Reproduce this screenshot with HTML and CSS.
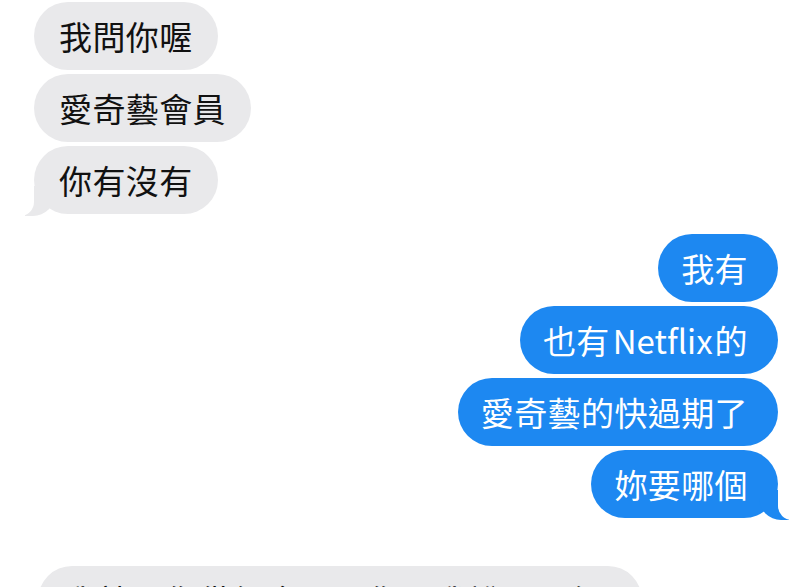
FILE: index.html
```html
<!DOCTYPE html>
<html lang="zh-Hant">
<head>
    <meta charset="UTF-8">
    <title>訊息</title>
    <link rel="stylesheet" href="styles.css">
</head>
<body>

    <div class="chat">
        <div class="group them">
            <div class="bubble">我問你喔</div>
            <div class="bubble">愛奇藝會員</div>
            <div class="bubble tail">你有沒有</div>
        </div>

        <div class="group me">
            <div class="bubble">我有</div>
            <div class="bubble">也有<span class="latin">Netflix</span>的</div>
            <div class="bubble">愛奇藝的快過期了</div>
            <div class="bubble tail">妳要哪個</div>
        </div>

        <div class="group them later">
            <div class="bubble wide">我就跟你借個會員，你跟我說要哪個</div>
        </div>
    </div>

</body>
</html>
```

FILE: styles.css
```css
* {
    margin: 0;
    padding: 0;
    box-sizing: border-box;
}
html, body {
    height: 100%;
    overflow: hidden;
    background: #fff;
}
.chat {
    display: flex;
    flex-direction: column;
    padding-top: 2px;
    font-family: "Noto Sans CJK TC", "Noto Sans", sans-serif;
    font-size: 33px;
}
.group {
    display: flex;
    flex-direction: column;
    gap: 4px;
}
.them {
    align-items: flex-start;
    margin-left: 34px;
}
.me {
    align-items: flex-end;
    margin-right: 21px;
    margin-top: 20px;
}
.later {
    margin-top: 48px;
    margin-left: 38px;
}
.bubble {
    position: relative;
    height: 68px;
    line-height: 68px;
    border-radius: 34px;
    white-space: nowrap;
    letter-spacing: 0.4px;
}
.them .bubble {
    background: #e9e9eb;
    color: #111;
    padding: 0 25px;
}
.them .wide {
    padding-right: 38px;
    letter-spacing: 0.8px;
}
.me .bubble {
    background: #1d88f1;
    color: #fff;
    padding: 0 30px 0 23px;
}
.latin {
    margin: 0 2px 0 3px;
    letter-spacing: 0;
}

/* 小尾巴 */
.tail::before,
.tail::after {
    content: "";
    position: absolute;
    bottom: -2px;
    height: 30px;
}
.them .tail::before {
    left: -9px;
    width: 30px;
    background: #e9e9eb;
    border-bottom-right-radius: 22px;
}
.them .tail::after {
    left: -16px;
    width: 16px;
    background: #fff;
    border-bottom-right-radius: 14px;
}
.me .tail::before {
    right: -11px;
    width: 30px;
    background: #1d88f1;
    border-bottom-left-radius: 22px;
}
.me .tail::after {
    right: -18px;
    width: 18px;
    background: #fff;
    border-bottom-left-radius: 14px;
}
```
